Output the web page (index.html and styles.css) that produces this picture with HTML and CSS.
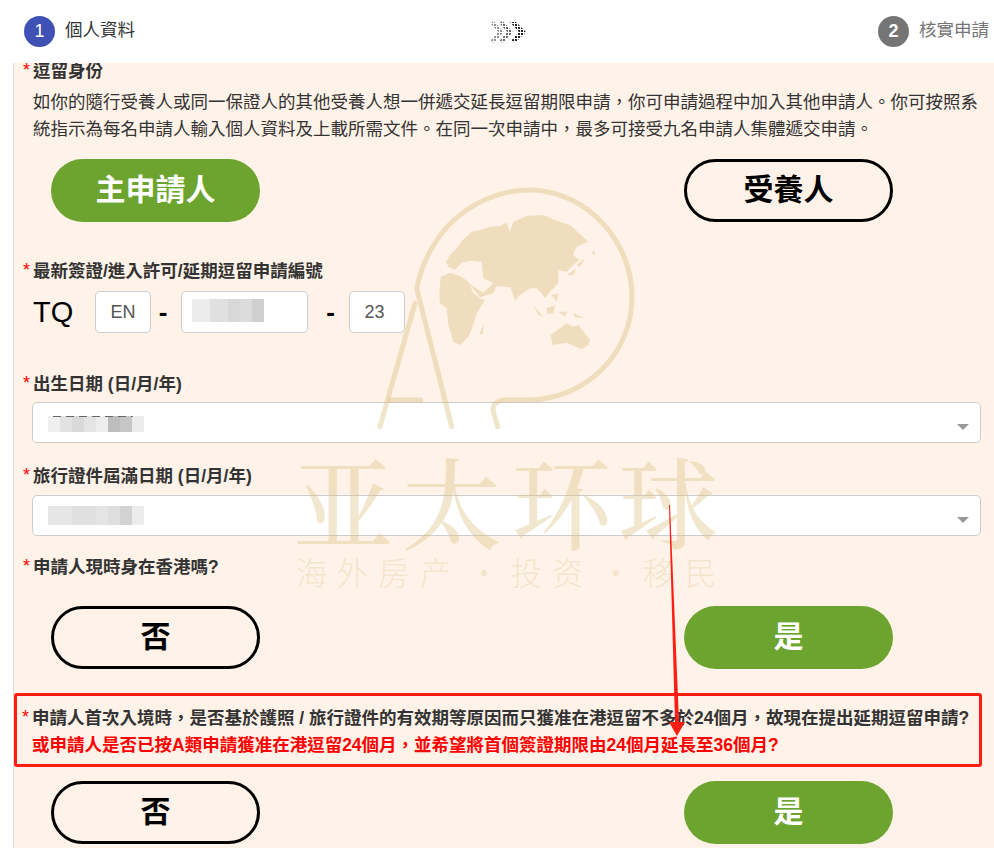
FILE: index.html
```html
<!DOCTYPE html>
<html lang="zh-Hant">
<head>
<meta charset="utf-8">
<title>個人資料</title>
<link rel="stylesheet" href="styles.css">
</head>
<body>
<header class="steps">
  <div class="step">
    <span class="step-num step-num-active">1</span>
    <span class="step-label">個人資料</span>
  </div>
  <svg class="chevrons" width="36" height="22" viewBox="0 0 36 22">
    <defs>
      <pattern id="dots" width="3" height="3" patternUnits="userSpaceOnUse">
        <rect width="2" height="2" fill="#222"/>
      </pattern>
    </defs>
    <path class="chev chev-1" d="M1 1 L10 11 L1 21"/>
    <path class="chev chev-2" d="M10 1 L19 11 L10 21"/>
    <path class="chev-solid" d="M19 1 L25 1 L35 11 L25 21 L19 21 L28 11 Z"/>
  </svg>
  <div class="step">
    <span class="step-num step-num-idle">2</span>
    <span class="step-label step-label-idle">核實申請</span>
  </div>
</header>

<main class="panel">
  <p class="label label-clipped"><span class="req">*</span>逗留身份</p>
  <p class="desc">如你的隨行受養人或同一保證人的其他受養人想一併遞交延長逗留期限申請<span class="punc">，</span>你可申請過程中加入其他申請人<span class="punc">。</span>你可按照系統指示為每名申請人輸入個人資料及上載所需文件<span class="punc">。</span>在同一次申請中<span class="punc">，</span>最多可接受九名申請人集體遞交申請<span class="punc">。</span></p>
  <div class="choices choices-status">
    <button class="choice choice-on">主申請人</button>
    <button class="choice choice-off">受養人</button>
  </div>

  <p class="label label-visa"><span class="req">*</span>最新簽證/進入許可/延期逗留申請編號</p>
  <div class="visa-row">
    <span class="visa-prefix">TQ</span>
    <span class="box box-short">EN</span>
    <span class="dash">-</span>
    <span class="box box-long"><span class="mosaic mosaic-visa"></span></span>
    <span class="dash">-</span>
    <span class="box box-short box-year">23</span>
  </div>

  <p class="label label-dob"><span class="req">*</span>出生日期 (日/月/年)</p>
  <div class="select"><span class="mosaic mosaic-dob"></span><span class="caret"></span></div>

  <p class="label label-expiry"><span class="req">*</span>旅行證件屆滿日期 (日/月/年)</p>
  <div class="select"><span class="mosaic mosaic-expiry"></span><span class="caret"></span></div>

  <p class="label label-inhk"><span class="req">*</span>申請人現時身在香港嗎?</p>
  <div class="choices choices-inhk">
    <button class="choice choice-off">否</button>
    <button class="choice choice-on">是</button>
  </div>

  <div class="callout">
    <p class="label label-callout"><span class="req">*</span>申請人首次入境時<span class="punc">，</span>是否基於護照 / 旅行證件的有效期等原因而只獲准在港逗留不多於24個月<span class="punc">，</span>故現在提出延期逗留申請?</p>
    <p class="label label-callout label-red">或申請人是否已按A類申請獲准在港逗留24個月<span class="punc">，</span>並希望將首個簽證期限由24個月延長至36個月?</p>
  </div>
  <div class="choices choices-last">
    <button class="choice choice-off">否</button>
    <button class="choice choice-on">是</button>
  </div>

  <svg class="watermark" width="460" height="420" viewBox="0 0 1380 1260" aria-hidden="true">
    <g class="wm-lines">
      <path d="M300 740 L405 370"/>
      <path d="M515 740 L410 325 C425 250 470 150 560 90 C640 35 720 28 760 30 C930 40 1056 190 1056 350 C1056 520 920 660 740 660 L680 660 C650 660 635 675 640 695 L653 740"/>
      <path d="M330 660 L422 660"/>
    </g>
    <g class="wm-land">
      <path d="M478 340 L482 290 L510 278 L545 290 L565 305 L580 340 L600 355 L615 360 L590 400 L578 440 L565 470 L540 495 L520 485 L505 435 L500 385 L480 370 Z"/>
      <path d="M498 245 L510 225 L530 205 L548 180 L575 155 L600 150 L630 140 L660 138 L680 128 L690 155 L700 125 L740 108 L790 105 L830 122 L870 135 L925 185 L890 200 L878 225 L898 240 L880 255 L860 275 L835 270 L835 310 L810 335 L795 355 L785 340 L770 325 L750 325 L735 335 L720 345 L705 362 L692 322 L650 318 L640 340 L600 352 L565 310 L610 338 L640 310 L610 295 L605 245 L625 262 L628 280 L605 245 L575 242 L545 248 L525 270 L505 260 Z"/>
      <path d="M812 465 L860 430 L880 440 L895 435 L930 480 L925 495 L905 508 L860 488 L818 495 Z"/>
      <path d="M598 462 L612 432 L608 462 Z"/>
      <path d="M760 375 L790 410 L775 405 Z M800 385 L825 375 L820 400 L802 402 Z M835 395 L860 395 L855 410 Z M880 400 L915 415 L885 412 Z M815 345 L835 340 L830 365 Z"/>
      <path d="M860 285 L890 265 L880 285 Z M890 255 L915 235 L900 262 Z M940 210 L948 225 L935 222 Z"/>
    </g>
    <text class="wm-title" x="40 365 695 1015" y="1085">亚太环球</text>
    <text class="wm-sub" x="48 170 295 420 565 692 815 960 1088 1215" y="1214">海外房产·投资·移民</text>
  </svg>

  <svg class="arrow" width="30" height="240" viewBox="0 0 30 240" aria-hidden="true">
    <path d="M8 0 L9 0 L18 217 L24 217 L16 231 L8 217 L14 217 Z"/>
  </svg>
</main>
</body>
</html>
```
FILE: styles.css
```css
* { box-sizing: border-box; }
html, body { margin: 0; padding: 0; }
body {
  width: 994px;
  height: 851px;
  overflow: hidden;
  background: #fff;
  font-family: "Liberation Sans", "Noto Sans CJK TC", sans-serif;
  font-size: 17.5px;
  color: #333;
}
p { margin: 0; }

.steps {
  height: 63px;
  display: flex;
  align-items: center;
  justify-content: space-between;
  padding: 0 5px 0 24px;
  background: #fff;
}
.step { display: flex; align-items: center; gap: 10px; }
.step-num {
  width: 31px;
  height: 31px;
  border-radius: 50%;
  display: flex;
  align-items: center;
  justify-content: center;
  color: #fff;
  font-size: 18px;
}
.step-num-active { background: #3f51b5; }
.step-num-idle { background: #757575; font-weight: 700; }
.step-label { line-height: 28px; margin-bottom: 4px; color: #333; }
.step-label-idle { color: #757575; }
.chevrons { margin-left: 5px; }
.chev { fill: none; stroke: url(#dots); stroke-width: 4; }
.chev-1 { opacity: .5; }
.chev-2 { opacity: .7; }
.chev-solid { fill: url(#dots); }

.panel {
  position: relative;
  height: 785px;
  margin-left: 13px;
  padding-left: 18px;
  background: #fff2e8;
  border-left: 1px solid #ddd;
  overflow: hidden;
}
.punc { font-family: "Noto Sans CJK SC", sans-serif; line-height: 1; }
.label { font-weight: 700; line-height: 27px; position: relative; padding-left: 1px; }
.req {
  position: absolute;
  left: -9px;
  top: 2px;
  color: #f00;
  font-weight: 400;
  font-size: 18px;
  line-height: 20px;
}
.label-clipped { margin-top: -5px; }
.desc {
  width: 951px;
  margin-top: 4px;
  padding-left: 1px;
  line-height: 27px;
}
.choices {
  display: flex;
  justify-content: space-between;
  width: 842px;
  margin-left: 19px;
}
.choices-status { margin-top: 16px; }
.choices-inhk { margin-top: 25px; }
.choices-last { margin-top: 14px; }
.choice {
  width: 209px;
  height: 63px;
  border-radius: 32px;
  font-family: inherit;
  font-size: 30px;
  font-weight: 700;
  padding: 0 0 8px;
}
.choice-on { background: #6ca42f; color: #fff; border: none; }
.choice-off { background: transparent; color: #000; border: 3px solid #000; }

.label-visa { margin-top: 36px; }
.visa-row {
  display: flex;
  align-items: center;
  margin-top: 6px;
  padding-left: 1px;
}
.visa-prefix { width: 62px; font-size: 29px; color: #000; }
.box {
  height: 42px;
  display: flex;
  align-items: center;
  justify-content: center;
  background: #fff;
  border: 1px solid #ccc;
  border-radius: 5px;
  color: #555;
  font-size: 18px;
}
.box-short { width: 56px; }
.box-year { padding-right: 5px; }
.box-long { width: 127px; justify-content: flex-start; padding-left: 10px; }
.dash {
  width: 30px;
  padding-right: 6px;
  text-align: center;
  font-size: 26px;
  font-weight: 700;
  color: #000;
}
.box-long + .dash { width: 41px; padding: 0 0 0 4px; }

.label-dob { margin-top: 38px; }
.label-expiry { margin-top: 20px; }
.label-inhk { margin-top: 18px; }
.select {
  position: relative;
  width: 949px;
  height: 41px;
  margin-top: 4px;
  display: flex;
  align-items: center;
  padding-left: 15px;
  background: #fff;
  border: 1px solid #ccc;
  border-radius: 5px;
}
.label-expiry + .select { margin-top: 5px; }
.caret {
  position: absolute;
  right: 11px;
  top: 21px;
  border-style: solid;
  border-width: 6px 6px 0;
  border-color: #999 transparent transparent;
}
.mosaic {
  display: block;
  position: relative;
  background:
    linear-gradient(90deg,
      #efefef 0 12%, #e2e2e2 12% 25%, #d9d9d9 25% 38%, #e4e4e4 38% 50%,
      #ededed 50% 62%, #bdbdbd 62% 75%, #c6c6c6 75% 88%, #ececec 88% 100%);
}
.mosaic-dob { width: 96px; height: 16px; margin-top: 2px; }
.mosaic-dob::before {
  content: "";
  position: absolute;
  left: 5px;
  top: 0;
  width: 80px;
  height: 1px;
  background: repeating-linear-gradient(90deg, #666 0 8px, transparent 8px 13px);
}
.mosaic-expiry {
  width: 96px;
  height: 19px;
  margin-top: -1px;
  background:
    linear-gradient(90deg,
      #e6e6e6 0 25%, #e0e0e0 25% 50%, #e4e4e4 50% 62%, #dedede 62% 75%,
      #d2d2d2 75% 88%, #ececec 88% 100%);
}
.mosaic-visa {
  width: 72px;
  height: 23px;
  margin-top: -3px;
  background:
    linear-gradient(90deg,
      #ececec 0 25%, #e0e0e0 25% 50%, #d8d8d8 50% 66%, #dcdcdc 66% 83%, #cfcfcf 83% 100%);
}

.callout {
  width: 968px;
  height: 74px;
  margin: 24px 0 0 -18px;
  padding: 9px 0 0 14px;
  border: 3px solid #ff1c10;
  border-radius: 3px;
}
.label-callout { white-space: nowrap; }
.label-red { color: #f00; }

.watermark {
  position: absolute;
  left: 266px;
  top: 117px;
  pointer-events: none;
}
.wm-lines path {
  fill: none;
  stroke: #d9c284;
  stroke-opacity: .42;
  stroke-width: 15;
  stroke-linecap: round;
  stroke-linejoin: round;
}
.wm-land path { fill: #d9c284; fill-opacity: .42; }
.wm-title {
  font-family: "Noto Serif CJK SC", "Noto Sans CJK SC", serif;
  font-size: 300px;
  font-weight: 500;
  fill: #d9c284;
  fill-opacity: .4;
}
.wm-sub {
  font-family: "Noto Sans CJK SC", sans-serif;
  font-size: 94px;
  font-weight: 300;
  fill: #d9c284;
  fill-opacity: .3;
}
.arrow {
  position: absolute;
  left: 647px;
  top: 442px;
  pointer-events: none;
}
.arrow path { fill: #ff1c10; }
```
